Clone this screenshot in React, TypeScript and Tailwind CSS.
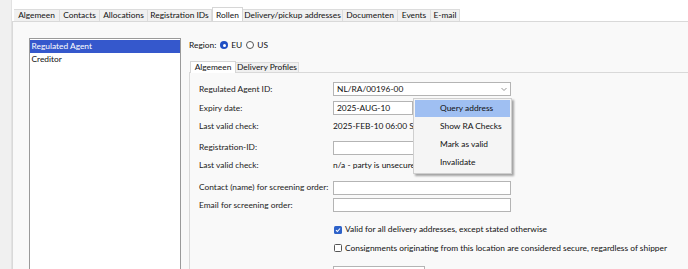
import React from 'react';

const font = { fontFamily: 'Lato, "Liberation Sans", sans-serif' };

const tabs = [
  { label: 'Algemeen', w: 'w-[46px]' },
  { label: 'Contacts', w: 'w-[40px]' },
  { label: 'Allocations', w: 'w-[48px]' },
  { label: 'Registration IDs', w: 'w-[64px]' },
  { label: 'Rollen', w: 'w-[31px]', active: true },
  { label: 'Delivery/pickup addresses', w: 'w-[100px]' },
  { label: 'Documenten', w: 'w-[55px]' },
  { label: 'Events', w: 'w-[33px]' },
  { label: 'E-mail', w: 'w-[29px]' },
];

const Input = ({ w, children }: { w: string; children?: React.ReactNode }) => (
  <div className={`${w} h-[14px] border border-[#b4b4b4] bg-white flex items-center px-[3px] text-[#111]`}>
    {children}
  </div>
);

const Row = ({ mt, label, children }: { mt: string; label: string; children?: React.ReactNode }) => (
  <div className={`${mt} h-[14px] flex items-center shrink-0`}>
    <div className="w-[134px] text-[#222] whitespace-nowrap">{label}</div>
    {children}
  </div>
);

const Check = ({ checked, mt, label }: { checked?: boolean; mt: string; label: string }) => (
  <div className={`${mt} h-[14px] flex items-center pl-[135px] shrink-0`}>
    {checked ? (
      <div className="w-[8px] h-[8px] rounded-[1.5px] bg-[#2e62c9] flex items-center justify-center">
        <svg width="6" height="6" viewBox="0 0 6 6">
          <path d="M1 3.2 L2.4 4.5 L5 1.5" stroke="white" strokeWidth="1.1" fill="none" />
        </svg>
      </div>
    ) : (
      <div className="w-[8px] h-[8px] rounded-[1.5px] border border-[#555] bg-white" />
    )}
    <span className="ml-[3px] text-[#111] whitespace-nowrap">{label}</span>
  </div>
);

export default function App() {
  return (
    <div className="w-[688px] h-[269px] flex bg-white overflow-hidden text-[8.4px] leading-none" style={font}>
      <div className="w-[12px] bg-[#f0f0f0] border-r border-[#e2e2e2]" />
      <div className="flex-1 flex flex-col min-h-0">
        <div className="h-[21px] shrink-0 pl-[2px] flex items-end">
          {tabs.map((t) =>
            t.active ? (
              <div key={t.label} className={`${t.w} h-[15px] bg-white border-x border-t border-[#d6d6d6] flex items-center justify-center text-[#111] -mb-px relative`}>
                {t.label}
              </div>
            ) : (
              <div key={t.label} className={`${t.w} h-[12.5px] bg-[#f0f0f0] border-r border-t border-[#dcdcdc] flex items-center justify-center text-[#111] whitespace-nowrap`}>
                {t.label}
              </div>
            ),
          )}
        </div>
        <div className="flex-1 min-h-0 bg-[#f9f9f9] border-t border-l border-[#d9d9d9] flex pt-[16px] pl-[16px] relative">
          <div className="w-[152px] h-[260px] shrink-0 border border-[#9a9a9a] bg-white">
            <div className="h-[12.5px] mt-px bg-[#3558cc] text-white flex items-center pl-[1.5px]">Regulated Agent</div>
            <div className="h-[12.5px] flex items-center pl-[1.5px] text-[#111]">Creditor</div>
          </div>
          <div className="ml-[8px] flex-1 flex flex-col">
            <div className="mt-[1px] h-[12px] shrink-0 flex items-center text-[#111]">
              <span>Region:</span>
              <span className="ml-[4px] w-[8px] h-[8px] rounded-full bg-[#1f4fc4] flex items-center justify-center">
                <span className="w-[3px] h-[3px] rounded-full bg-white" />
              </span>
              <span className="ml-[3px]">EU</span>
              <span className="ml-[4px] w-[8px] h-[8px] rounded-full border border-[#555] bg-white" />
              <span className="ml-[3px]">US</span>
            </div>
            <div className="mt-[10px] shrink-0 flex items-end pl-[1px]">
              <div className="w-[46px] h-[12px] bg-white border-x border-t border-[#d6d6d6] flex items-center justify-center text-[#111] -mb-px relative">Algemeen</div>
              <div className="w-[63px] h-[10.5px] bg-[#f0f0f0] border-r border-t border-[#dcdcdc] flex items-center justify-center text-[#111]">Delivery Profiles</div>
            </div>
            <div className="flex-1 flex flex-col border-t border-l border-[#d9d9d9] pl-[9px]">
              <Row mt="mt-[9px]" label="Regulated Agent ID:">
                <div className="w-[178px] h-[14px] border border-[#b4b4b4] bg-white flex items-center pl-[3px] text-[#111]">
                  <span className="flex-1">NL/RA/00196-00</span>
                  <svg width="10" height="10" viewBox="0 0 10 10" className="mr-[1px]">
                    <path d="M2.5 4 L5 6.5 L7.5 4" stroke="#8a8a8a" strokeWidth="0.9" fill="none" />
                  </svg>
                </div>
              </Row>
              <Row mt="mt-[5px]" label="Expiry date:">
                <Input w="w-[80px]">2025-AUG-10</Input>
              </Row>
              <Row mt="mt-[4px]" label="Last valid check:">
                <span className="text-[#111] whitespace-nowrap">2025-FEB-10 06:00 Screening</span>
              </Row>
              <Row mt="mt-[7.5px]" label="Registration-ID:">
                <Input w="w-[178px]" />
              </Row>
              <Row mt="mt-[4px]" label="Last valid check:">
                <span className="text-[#111] whitespace-nowrap">n/a - party is unsecured</span>
              </Row>
              <Row mt="mt-[8px]" label="Contact (name) for screening order:">
                <Input w="w-[178px]" />
              </Row>
              <Row mt="mt-[3.5px]" label="Email for screening order:">
                <Input w="w-[178px]" />
              </Row>
              <Check checked mt="mt-[10.5px]" label="Valid for all delivery addresses, except stated otherwise" />
              <Check mt="mt-[4.5px]" label="Consignments originating from this location are considered secure, regardless of shipper" />
              <div className="mt-[10.5px] pl-[134px] shrink-0">
                <Input w="w-[92px]" />
              </div>
            </div>
          </div>
          <div className="absolute left-[400px] top-[76px] w-[99px] bg-[#f5f5f5] border border-[#cfcfcf] shadow-[2px_2px_2px_rgba(0,0,0,0.35)] py-px">
            <div className="h-[17px] mx-px bg-[#9fbff2] flex items-center pl-[25px] text-[#111]">Query address</div>
            <div className="h-[18px] flex items-center pl-[26px] text-[#111]">Show RA Checks</div>
            <div className="h-[18px] flex items-center pl-[26px] text-[#111]">Mark as valid</div>
            <div className="h-[19px] flex items-center pl-[26px] text-[#111]">Invalidate</div>
          </div>
        </div>
      </div>
    </div>
  );
}
